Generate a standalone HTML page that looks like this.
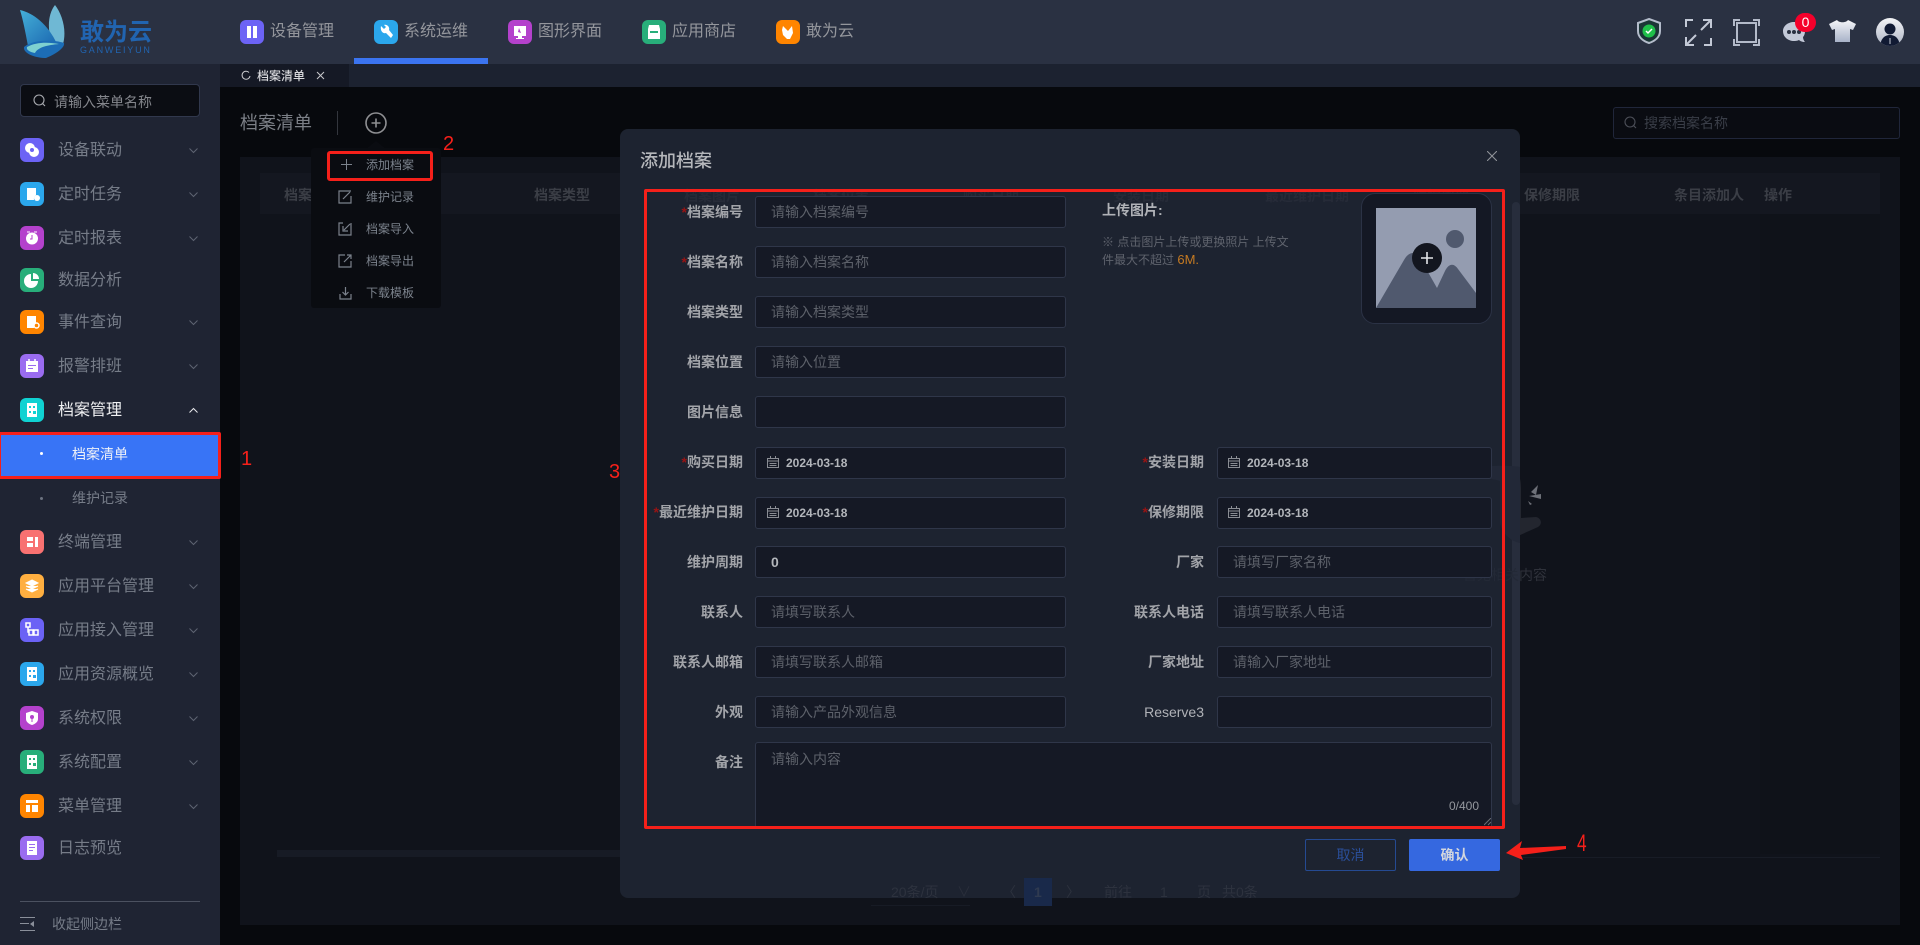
<!DOCTYPE html>
<html lang="zh"><head><meta charset="utf-8"><title>档案清单</title>
<style>
*{box-sizing:border-box;margin:0;padding:0}
html,body{width:1920px;height:945px;overflow:hidden;background:#07090d;font-family:"Liberation Sans","Noto Sans CJK SC",sans-serif}
.a{position:absolute}
.t{position:absolute;white-space:nowrap;line-height:20px}
svg{position:absolute;display:block}
.ic{position:absolute;width:24px;height:24px;border-radius:6px}
.nav{font-size:16px;color:#94969c}
.m{font-size:16px;color:#767c88;left:58px;margin-top:1px}
.chev{position:absolute;left:189px;width:9px;height:9px}
.dd{font-size:12px;color:#7b828c;left:366px}
.th{font-size:14px;font-weight:700;color:#3b3e46}
.ghost{font-size:14px;font-weight:700;color:#262b38}
.l{font-size:14px;font-weight:700;color:#a2a4a9;text-align:right}
.l i{font-style:normal;font-weight:700;color:#981414}
.in{position:absolute;height:32px;background:#151925;border:1px solid #2f3649;border-radius:3px}
.p{font-size:14px;color:#5d616a}
.d{font-size:12px;font-weight:700;color:#b3b6bb}
.pg{font-size:14px;color:#2d323e}
</style></head><body>

<!-- header -->
<div class="a" style="left:0;top:0;width:1920px;height:64px;background:#2a3142"></div>
<div class="a" style="left:0;top:64px;width:1920px;height:23px;background:#1c2230"></div>
<div class="a" style="left:220px;top:64px;width:129px;height:23px;background:#151925"></div>

<!-- logo -->
<svg style="left:20px;top:5px" width="46" height="54" viewBox="20 5 46 54">
<defs><linearGradient id="lg" x1="0" y1="0" x2="1" y2="1"><stop offset="0" stop-color="#45b0d8"/><stop offset="1" stop-color="#1a66b0"/></linearGradient></defs>
<path d="M55 5C48 14 47 28 52 44L63 44C67 30 62 14 55 5Z" fill="#6fb8d4"/>
<path d="M20 10C33 13 48 24 57 44C46 39 35 41 28 46C25 30 23 20 20 10Z" fill="url(#lg)"/>
<path d="M24 47C32 40 52 39 64 43C65 47 58 53 46 58C36 58 23 54 24 47Z" fill="#1c6db6"/>
<path d="M27 47C36 42 48 42 59 44C48 45 38 47 35 53C30 52 26 50 27 47Z" fill="#7ed0d0"/>
</svg>
<div class="t" style="left:80px;top:21px;font-size:24px;line-height:24px;font-weight:700;color:#2164b0">敢为云</div>
<div class="t" style="left:80px;top:45px;font-size:9px;line-height:10px;color:#2164b0;letter-spacing:1.8px">GANWEIYUN</div>

<!-- top nav -->
<div class="ic" style="left:240px;top:20px;background:#6c63f5"></div>
<svg style="left:240px;top:20px" width="24" height="24"><path d="M7 6h4v12H7zM13 6h4v12h-4z" fill="#fff"/></svg>
<div class="t nav" style="left:270px;top:22px">设备管理</div>
<div class="ic" style="left:374px;top:20px;background:#2ba7ec"></div>
<svg style="left:374px;top:20px" width="24" height="24"><path d="M7 6l3 3 2-2-2-2c3-1 6 2 5 5l4 5-2 3-5-5c-3 1-6-2-5-7z" fill="#fff"/></svg>
<div class="t nav" style="left:404px;top:22px">系统运维</div>
<div class="ic" style="left:508px;top:20px;background:#b441cc"></div>
<svg style="left:508px;top:20px" width="24" height="24"><path d="M6 6h12v10h-4v2h2v1H8v-1h2v-2H6z" fill="#fff"/><path d="M11 8l2 5-3-1z" fill="#b441cc"/></svg>
<div class="t nav" style="left:538px;top:22px">图形界面</div>
<div class="ic" style="left:642px;top:20px;background:#28ae7a"></div>
<svg style="left:642px;top:20px" width="24" height="24"><path d="M7 5h10l1 4v10H6V9z" fill="#fff"/><path d="M8 11h8v2H8z" fill="#28ae7a"/></svg>
<div class="t nav" style="left:672px;top:22px">应用商店</div>
<div class="ic" style="left:776px;top:20px;background:#ff8500"></div>
<svg style="left:776px;top:20px" width="24" height="24"><path d="M7 6l5 5 4-5 1 7-3 6h-3L7 15l-1-5z" fill="#fff"/></svg>
<div class="t nav" style="left:806px;top:22px">敢为云</div>
<div class="a" style="left:354px;top:58px;width:134px;height:6px;background:#3b74f0"></div>

<!-- top right icons -->
<svg style="left:1637px;top:18px" width="24" height="26" viewBox="0 0 24 26"><path d="M12 1L23 5V13C23 19 18 23 12 25C6 23 1 19 1 13V5Z" fill="#1b3536" stroke="#b4bccb" stroke-width="2"/><circle cx="12" cy="13" r="6.5" fill="#1fc04a"/><path d="M9 13l2 2 4-4" fill="none" stroke="#fff" stroke-width="1.5"/></svg>
<svg style="left:1685px;top:19px" width="27" height="27" viewBox="0 0 27 27" fill="none" stroke="#c3c9d6" stroke-width="2"><path d="M8 1H1V8M1 26 11 16M1 18V26H9M26 1 16 11M18 1H26V9M26 19V26H19"/></svg>
<svg style="left:1733px;top:19px" width="27" height="27" viewBox="0 0 27 27" fill="none" stroke="#b3bac9" stroke-width="2"><path d="M7 1H1V7M20 1h6v6M1 20v6h6M26 20v6h-6"/><rect x="4" y="4" width="19" height="19"/></svg>
<svg style="left:1783px;top:21px" width="23" height="23" viewBox="0 0 23 23"><path d="M11 1C17 1 22 5 22 10C22 13 21 15 20 16C20 18 21 20 22 21C19 21 17 20 16 19C14 20 12 20 11 20C5 20 0 16 0 10C0 5 5 1 11 1Z" fill="#c3c9d8"/><circle cx="6" cy="11" r="2" fill="#2a3142"/><circle cx="11" cy="11" r="2" fill="#2a3142"/><circle cx="16" cy="11" r="2" fill="#2a3142"/></svg>
<div class="a" style="left:1795px;top:13px;width:21px;height:19px;border-radius:10px;background:#f5002b;color:#fff;font-size:14px;line-height:19px;text-align:center">0</div>
<svg style="left:1829px;top:19px" width="27" height="24" viewBox="0 0 27 24"><defs><linearGradient id="ts" x1="0" y1="0" x2="0" y2="1"><stop offset="0" stop-color="#f4f5f8"/><stop offset="1" stop-color="#a8b2c8"/></linearGradient></defs><path d="M8 1C10 4 17 4 19 1L27 5 24 11 21 10V23H6V10L3 11 0 5Z" fill="url(#ts)"/></svg>
<div class="a" style="left:1876px;top:18px;width:28px;height:28px;border-radius:50%;background:linear-gradient(#f2f3f6,#aeb5c5);overflow:hidden"><svg style="left:0;top:0" width="28" height="28"><circle cx="14" cy="11" r="5.5" fill="#111a33"/><path d="M4 28C5 20 9 17 14 17C19 17 23 20 24 28Z" fill="#111a33"/><path d="M14 20v6" stroke="#c8ccd6"/></svg></div>

<!-- tab -->
<svg style="left:241px;top:70px" width="10" height="11" fill="none" stroke="#c8c9cc" stroke-width="1"><path d="M8 2.5A4 4 0 1 0 9 6"/></svg>
<div class="t" style="left:257px;top:66px;font-size:12px;font-weight:500;color:#d8d9dc">档案清单</div>
<svg style="left:316px;top:71px" width="9" height="9" stroke="#c8c9cc"><path d="M1 1l7 7M8 1l-7 7"/></svg>

<!-- sidebar -->
<div class="a" style="left:0;top:64px;width:220px;height:881px;background:#1f2433"></div>
<div class="a" style="left:20px;top:84px;width:180px;height:33px;background:#0b0d13;border:1px solid #31384d;border-radius:4px"></div>
<svg style="left:33px;top:94px" width="13" height="14" fill="none" stroke="#a9abb0" stroke-width="1.1"><circle cx="6" cy="6" r="5"/><path d="M9.5 9.5l2.5 2.5"/></svg>
<div class="t" style="left:54px;top:92px;font-size:14px;color:#84868c">请输入菜单名称</div>

<div class="ic" style="left:20px;top:138px;background:#6c63f5"></div><svg style="left:20px;top:138px" width="24" height="24"><circle cx="10" cy="10" r="5" fill="#fff"/><circle cx="14" cy="14" r="5" fill="#fff"/><circle cx="12" cy="12" r="2" fill="#6c63f5"/></svg><div class="t m" style="top:140px">设备联动</div>
<div class="ic" style="left:20px;top:182px;background:#2ba7ec"></div><svg style="left:20px;top:182px" width="24" height="24"><path d="M7 6h9v7a5 5 0 0 0-2 5H7z" fill="#fff"/><circle cx="17" cy="16" r="3" fill="#fff"/></svg><div class="t m" style="top:184px">定时任务</div>
<div class="ic" style="left:20px;top:226px;background:#b441cc"></div><svg style="left:20px;top:226px" width="24" height="24"><circle cx="12" cy="12.5" r="6" fill="#fff"/><path d="M12 9v4h-2" stroke="#b441cc" fill="none"/><path d="M7 6h3M14 6h3" stroke="#fff"/></svg><div class="t m" style="top:228px">定时报表</div>
<div class="ic" style="left:20px;top:268px;background:#28ae7a"></div><svg style="left:20px;top:268px" width="24" height="24"><path d="M11 6v7h7a7 7 0 1 1-7-7z" fill="#fff"/><path d="M13 5a6 6 0 0 1 6 6h-6z" fill="#fff"/></svg><div class="t m" style="top:270px">数据分析</div>
<div class="ic" style="left:20px;top:310px;background:#ff8500"></div><svg style="left:20px;top:310px" width="24" height="24"><path d="M7 6h9v7a5 5 0 0 0-2 5H7z" fill="#fff"/><circle cx="16.5" cy="15.5" r="2.5" fill="none" stroke="#fff" stroke-width="1.5"/></svg><div class="t m" style="top:312px">事件查询</div>
<div class="ic" style="left:20px;top:354px;background:#9a6cf0"></div><svg style="left:20px;top:354px" width="24" height="24"><path d="M6 7h12v11H6z" fill="#fff"/><path d="M9 5v3M15 5v3" stroke="#fff" stroke-width="1.5"/><path d="M8 11h8v1H8zM8 14h5v1H8z" fill="#9a6cf0"/></svg><div class="t m" style="top:356px">报警排班</div>
<div class="ic" style="left:20px;top:398px;background:#10d2d2"></div><svg style="left:20px;top:398px" width="24" height="24"><path d="M7 5h10v14H7z" fill="#fff"/><path d="M9 8h2v2H9zM13 8h2v2h-2zM9 13h2v2H9zM13 13h3v3h-3z" fill="#10d2d2"/></svg><div class="t m" style="top:400px;color:#f0f1f3">档案管理</div>

<div class="a" style="left:0;top:434px;width:220px;height:43px;background:#3874f6"></div>
<div class="a" style="left:40px;top:452px;width:3px;height:3px;border-radius:50%;background:#fff"></div>
<div class="t" style="left:72px;top:444px;font-size:14px;color:#eef1f8">档案清单</div>
<div class="a" style="left:40px;top:497px;width:3px;height:3px;border-radius:50%;background:#6c7280"></div>
<div class="t" style="left:72px;top:488px;font-size:14px;color:#767c88">维护记录</div>

<div class="ic" style="left:20px;top:530px;background:#f87171"></div><svg style="left:20px;top:530px" width="24" height="24"><path d="M7 7h6v4H7zM7 13h6v4H7zM15 7h3v10h-3" fill="#fff"/></svg><div class="t m" style="top:532px">终端管理</div>
<div class="ic" style="left:20px;top:574px;background:#ffaf40"></div><svg style="left:20px;top:574px" width="24" height="24"><path d="M12 6l6 3-6 3-6-3zM6 12l6 3 6-3M6 15l6 3 6-3" fill="#fff" stroke="#fff"/></svg><div class="t m" style="top:576px">应用平台管理</div>
<div class="ic" style="left:20px;top:618px;background:#6b62f5"></div><svg style="left:20px;top:618px" width="24" height="24" fill="none" stroke="#fff" stroke-width="1.5"><rect x="6" y="5" width="4" height="4"/><rect x="9" y="12" width="4" height="5"/><rect x="14" y="12" width="4" height="5"/><path d="M8 9v5h1"/></svg><div class="t m" style="top:620px">应用接入管理</div>
<div class="ic" style="left:20px;top:662px;background:#2ba7ec"></div><svg style="left:20px;top:662px" width="24" height="24"><path d="M7 5h10v14H7z" fill="#fff"/><path d="M9 8h2v2H9zM13 8h2v2h-2zM9 13h2v2H9zM13 13h3v3h-3z" fill="#2ba7ec"/></svg><div class="t m" style="top:664px">应用资源概览</div>
<div class="ic" style="left:20px;top:706px;background:#b441cc"></div><svg style="left:20px;top:706px" width="24" height="24"><path d="M12 5l6 2v6c0 3-3 5-6 6-3-1-6-3-6-6V7z" fill="#fff"/><circle cx="12" cy="11" r="2" fill="#b441cc"/><path d="M12 12v4" stroke="#b441cc"/></svg><div class="t m" style="top:708px">系统权限</div>
<div class="ic" style="left:20px;top:750px;background:#28ae7a"></div><svg style="left:20px;top:750px" width="24" height="24"><path d="M7 5h10v14H7z" fill="#fff"/><path d="M9 8h2v2H9zM13 8h2v2h-2zM9 13h2v2H9zM13 13h3v3h-3z" fill="#28ae7a"/></svg><div class="t m" style="top:752px">系统配置</div>
<div class="ic" style="left:20px;top:794px;background:#ff8500"></div><svg style="left:20px;top:794px" width="24" height="24"><path d="M6 6h12v3H6zM6 11h4v7H6zM12 11h6v7h-6z" fill="#fff"/></svg><div class="t m" style="top:796px">菜单管理</div>
<div class="ic" style="left:20px;top:836px;background:#9a6cf0"></div><svg style="left:20px;top:836px" width="24" height="24"><path d="M7 5h10v14H7z" fill="#fff"/><path d="M9 8h6v1H9zM9 11h6v1H9zM9 14h4v1H9z" fill="#9a6cf0"/></svg><div class="t m" style="top:838px">日志预览</div>

<svg class="chev" style="top:146px" width="9" height="9" fill="none" stroke="#5e6472"><path d="M.5 2.5l4 4 4-4"/></svg>
<svg class="chev" style="top:190px" width="9" height="9" fill="none" stroke="#5e6472"><path d="M.5 2.5l4 4 4-4"/></svg>
<svg class="chev" style="top:234px" width="9" height="9" fill="none" stroke="#5e6472"><path d="M.5 2.5l4 4 4-4"/></svg>
<svg class="chev" style="top:318px" width="9" height="9" fill="none" stroke="#5e6472"><path d="M.5 2.5l4 4 4-4"/></svg>
<svg class="chev" style="top:362px" width="9" height="9" fill="none" stroke="#5e6472"><path d="M.5 2.5l4 4 4-4"/></svg>
<svg class="chev" style="top:406px" width="9" height="9" fill="none" stroke="#e8e9ec"><path d="M.5 6.5l4-4 4 4"/></svg>
<svg class="chev" style="top:538px" width="9" height="9" fill="none" stroke="#5e6472"><path d="M.5 2.5l4 4 4-4"/></svg>
<svg class="chev" style="top:582px" width="9" height="9" fill="none" stroke="#5e6472"><path d="M.5 2.5l4 4 4-4"/></svg>
<svg class="chev" style="top:626px" width="9" height="9" fill="none" stroke="#5e6472"><path d="M.5 2.5l4 4 4-4"/></svg>
<svg class="chev" style="top:670px" width="9" height="9" fill="none" stroke="#5e6472"><path d="M.5 2.5l4 4 4-4"/></svg>
<svg class="chev" style="top:714px" width="9" height="9" fill="none" stroke="#5e6472"><path d="M.5 2.5l4 4 4-4"/></svg>
<svg class="chev" style="top:758px" width="9" height="9" fill="none" stroke="#5e6472"><path d="M.5 2.5l4 4 4-4"/></svg>
<svg class="chev" style="top:802px" width="9" height="9" fill="none" stroke="#5e6472"><path d="M.5 2.5l4 4 4-4"/></svg>

<div class="a" style="left:20px;top:901px;width:180px;height:1px;background:#4b5160"></div>
<svg style="left:20px;top:917px" width="15" height="15" fill="#8a8f9a"><path d="M0 0h15v1H0zM0 6h9v1H0zM0 13h15v1H0zM14 4v6l-4-3z"/></svg>
<div class="t" style="left:52px;top:914px;font-size:14px;color:#767c88">收起侧边栏</div>

<!-- content -->
<div class="t" style="left:240px;top:113px;font-size:18px;color:#7b7f86">档案清单</div>
<div class="a" style="left:337px;top:111px;width:1px;height:24px;background:#33363d"></div>
<svg style="left:365px;top:112px" width="22" height="22" fill="none" stroke="#8e8f92" stroke-width="1.6"><circle cx="11" cy="11" r="10"/><path d="M6.5 11h9M11 6.500v9"/></svg>
<div class="a" style="left:1613px;top:107px;width:287px;height:32px;background:#0a0c12;border:1px solid #20263a;border-radius:3px"></div>
<svg style="left:1624px;top:116px" width="13" height="14" fill="none" stroke="#4c4f58" stroke-width="1.1"><circle cx="6" cy="6" r="5"/><path d="M9.500 9.500l2.500 2.500"/></svg>
<div class="t" style="left:1644px;top:113px;font-size:14px;color:#3a3e48">搜索档案名称</div>

<div class="a" style="left:240px;top:157px;width:1660px;height:768px;background:#10131b"></div>
<div class="a" style="left:260px;top:173px;width:1620px;height:41px;background:#141720"></div>
<div class="a" style="left:1760px;top:214px;width:120px;height:640px;background:#0f1219"></div>
<div class="t th" style="left:284px;top:185px">档案编号</div>
<div class="t th" style="left:534px;top:185px">档案类型</div>
<div class="t th" style="left:1524px;top:185px">保修期限</div>
<div class="t th" style="left:1674px;top:185px">条目添加人</div>
<div class="t th" style="left:1764px;top:185px">操作</div>
<div class="a" style="left:277px;top:850px;width:343px;height:7px;background:#171b25"></div>
<div class="a" style="left:1520px;top:857px;width:360px;height:1px;background:#181c26"></div>

<!-- empty figure seen right of modal -->
<svg style="left:1500px;top:460px" width="60" height="90" viewBox="0 0 60 90"><path d="M0 5C14 3 21 12 21 28V58L36 57C41 58 43 64 38 67L18 76H0Z" fill="#23262f"/><path d="M31 32l7-7-2 10zM29 36l12-2v5zM28 41l4 3-2 1z" fill="#6d7078"/></svg>
<div class="t" style="left:1519px;top:565px;font-size:14px;color:#2f323b">内容</div>

<!-- pagination -->
<div class="a" style="left:871px;top:905px;width:99px;height:1px;background:#171b25"></div>

<!-- dropdown -->
<svg style="left:366px;top:141px" width="20" height="8"><path d="M0 8L10 0l10 8z" fill="#0a0c11"/></svg>
<div class="a" style="left:311px;top:148px;width:130px;height:160px;background:#0a0c11;border-radius:3px"></div>
<svg style="left:341px;top:159px" width="11" height="11" stroke="#7b828c"><path d="M0 5.500h11M5.500 0v11"/></svg>
<div class="t dd" style="top:155px">添加档案</div>
<svg style="left:338px;top:190px" width="14" height="14" fill="none" stroke="#7b828c" stroke-width="1.2"><path d="M13 1H1v12h12V6M5 9l7-7"/></svg>
<div class="t dd" style="top:187px">维护记录</div>
<svg style="left:338px;top:222px" width="14" height="14" fill="none" stroke="#7b828c" stroke-width="1.2"><path d="M13 1V13H1V1h4M12 2L6 8M5 4v5h5"/></svg>
<div class="t dd" style="top:219px">档案导入</div>
<svg style="left:338px;top:254px" width="14" height="14" fill="none" stroke="#7b828c" stroke-width="1.2"><path d="M13 7v6H1V1h6M6 8l7-7M9 1h4v4"/></svg>
<div class="t dd" style="top:251px">档案导出</div>
<svg style="left:339px;top:286px" width="13" height="14" fill="none" stroke="#7b828c" stroke-width="1.200"><path d="M1 8v5h11V8M6.500 1v8M3.500 6l3 3 3-3"/></svg>
<div class="t dd" style="top:283px">下载模板</div>

<!-- modal -->
<div class="a" style="left:620px;top:129px;width:900px;height:769px;background:#1d2330;border-radius:8px"></div>
<div class="a" style="left:1512px;top:202px;width:8px;height:603px;background:#272d3c;border-radius:4px"></div>

<div class="t ghost" style="left:684px;top:186px">档案图片</div>
<div class="t ghost" style="left:813px;top:186px">档案位置</div>
<div class="t ghost" style="left:963px;top:186px">购买日期</div>
<div class="t ghost" style="left:1113px;top:186px">安装日期</div>
<div class="t ghost" style="left:1265px;top:186px">最近维护日期</div>
<div class="t ghost" style="left:1413px;top:186px">维护周期</div>
<div class="t pg" style="left:891px;top:882px">20条/页</div>
<div class="t pg" style="left:957px;top:882px;color:#2a2f3b">∨</div>
<div class="t pg" style="left:1002px;top:882px">〈</div>
<div class="a" style="left:1024px;top:878px;width:28px;height:28px;background:#19294a"></div>
<div class="t pg" style="left:1034px;top:882px;font-weight:700;color:#2f3a50">1</div>
<div class="t pg" style="left:1066px;top:882px">〉</div>
<div class="t pg" style="left:1104px;top:882px">前往</div>
<div class="t pg" style="left:1160px;top:882px">1</div>
<div class="t pg" style="left:1197px;top:882px">页</div>
<div class="t pg" style="left:1222px;top:882px">共0条</div>
<svg style="left:1460px;top:463px" width="60" height="80" viewBox="0 0 60 80"><path d="M8 8C14 2 50 2 60 4V80C50 78 42 70 40 60V18C30 14 16 18 8 8Z" fill="#222837"/></svg>
<div class="t" style="left:1463px;top:565px;font-size:14px;color:#232936">暂无相关</div>

<div class="t" style="left:640px;top:151px;font-size:18px;font-weight:500;color:#b5b7bb">添加档案</div>
<svg style="left:1487px;top:151px" width="10" height="10" stroke="#8f9298" stroke-width="1.100"><path d="M0 0l10 10M10 0L0 10"/></svg>

<!-- left col -->
<div class="t l" style="right:1177px;top:202px"><i>*</i>档案编号</div>
<div class="in" style="left:755px;top:196px;width:311px"></div><div class="t p" style="left:771px;top:202px">请输入档案编号</div>
<div class="t l" style="right:1177px;top:252px"><i>*</i>档案名称</div>
<div class="in" style="left:755px;top:246px;width:311px"></div><div class="t p" style="left:771px;top:252px">请输入档案名称</div>
<div class="t l" style="right:1177px;top:302px">档案类型</div>
<div class="in" style="left:755px;top:296px;width:311px"></div><div class="t p" style="left:771px;top:302px">请输入档案类型</div>
<div class="t l" style="right:1177px;top:352px">档案位置</div>
<div class="in" style="left:755px;top:346px;width:311px"></div><div class="t p" style="left:771px;top:352px">请输入位置</div>
<div class="t l" style="right:1177px;top:402px">图片信息</div>
<div class="in" style="left:755px;top:396px;width:311px"></div>

<div class="t l" style="right:1177px;top:452px"><i>*</i>购买日期</div>
<div class="in" style="left:755px;top:447px;width:311px"></div><div class="t d" style="left:786px;top:453px">2024-03-18</div>
<svg style="left:767px;top:456px" width="12" height="12" fill="none" stroke="#8a8d94"><path d="M.5 2.500h11v9H.5zM.5 5h11M3.500 0v2M8.500 0v2M2.500 7.500h7M2.500 9.500h7"/></svg>
<div class="t l" style="right:1177px;top:502px"><i>*</i>最近维护日期</div>
<div class="in" style="left:755px;top:497px;width:311px"></div><div class="t d" style="left:786px;top:503px">2024-03-18</div>
<svg style="left:767px;top:506px" width="12" height="12" fill="none" stroke="#8a8d94"><path d="M.5 2.500h11v9H.5zM.5 5h11M3.500 0v2M8.500 0v2M2.500 7.500h7M2.500 9.500h7"/></svg>
<div class="t l" style="right:1177px;top:552px">维护周期</div>
<div class="in" style="left:755px;top:546px;width:311px"></div><div class="t" style="left:771px;top:552px;font-size:14px;font-weight:700;color:#b3b6bb">0</div>
<div class="t l" style="right:1177px;top:602px">联系人</div>
<div class="in" style="left:755px;top:596px;width:311px"></div><div class="t p" style="left:771px;top:602px">请填写联系人</div>
<div class="t l" style="right:1177px;top:652px">联系人邮箱</div>
<div class="in" style="left:755px;top:646px;width:311px"></div><div class="t p" style="left:771px;top:652px">请填写联系人邮箱</div>
<div class="t l" style="right:1177px;top:702px">外观</div>
<div class="in" style="left:755px;top:696px;width:311px"></div><div class="t p" style="left:771px;top:702px">请输入产品外观信息</div>

<!-- right col -->
<div class="t l" style="right:716px;top:452px"><i>*</i>安装日期</div>
<div class="in" style="left:1217px;top:447px;width:275px"></div><div class="t d" style="left:1247px;top:453px">2024-03-18</div>
<svg style="left:1228px;top:456px" width="12" height="12" fill="none" stroke="#8a8d94"><path d="M.5 2.500h11v9H.5zM.5 5h11M3.500 0v2M8.500 0v2M2.500 7.500h7M2.500 9.500h7"/></svg>
<div class="t l" style="right:716px;top:502px"><i>*</i>保修期限</div>
<div class="in" style="left:1217px;top:497px;width:275px"></div><div class="t d" style="left:1247px;top:503px">2024-03-18</div>
<svg style="left:1228px;top:506px" width="12" height="12" fill="none" stroke="#8a8d94"><path d="M.5 2.500h11v9H.5zM.5 5h11M3.500 0v2M8.500 0v2M2.500 7.500h7M2.500 9.500h7"/></svg>
<div class="t l" style="right:716px;top:552px">厂家</div>
<div class="in" style="left:1217px;top:546px;width:275px"></div><div class="t p" style="left:1233px;top:552px">请填写厂家名称</div>
<div class="t l" style="right:716px;top:602px">联系人电话</div>
<div class="in" style="left:1217px;top:596px;width:275px"></div><div class="t p" style="left:1233px;top:602px">请填写联系人电话</div>
<div class="t l" style="right:716px;top:652px">厂家地址</div>
<div class="in" style="left:1217px;top:646px;width:275px"></div><div class="t p" style="left:1233px;top:652px">请输入厂家地址</div>
<div class="t l" style="right:716px;top:702px;font-weight:400;color:#b0b2b7">Reserve3</div>
<div class="in" style="left:1217px;top:696px;width:275px"></div>

<!-- upload -->
<div class="t" style="left:1102px;top:200px;font-size:14px;font-weight:700;color:#b0b2b7">上传图片:</div>
<div class="t" style="left:1102px;top:232px;font-size:12px;color:#5f636d">※ 点击图片上传或更换照片 上传文</div>
<div class="t" style="left:1102px;top:250px;font-size:12px;color:#5f636d">件最大不超过 <span style="color:#c57a22;font-size:13px">6M.</span></div>
<div class="a" style="left:1361px;top:193px;width:131px;height:131px;background:#141824;border:1px solid #2b3245;border-radius:14px"></div>
<svg style="left:1376px;top:208px" width="100" height="100" viewBox="0 0 100 100"><rect width="100" height="100" fill="#949cb0"/><circle cx="79" cy="31" r="9" fill="#50596e"/><path d="M0 100L28 52C33 43 40 43 44 50L61 80L69 63C73 55 78 55 82 61L100 85V100Z" fill="#50596e"/></svg>
<div class="a" style="left:1412px;top:243px;width:30px;height:30px;border-radius:50%;background:#13161f"></div>
<svg style="left:1421px;top:252px" width="12" height="12" stroke="#e4e5e8" stroke-width="1.600"><path d="M0 6h12M6 0v12"/></svg>

<!-- textarea -->
<div class="t l" style="right:1177px;top:752px">备注</div>
<div class="in" style="left:755px;top:742px;width:737px;height:86px;border-radius:3px 3px 0 0"></div>
<div class="t p" style="left:771px;top:749px">请输入内容</div>
<div class="t" style="left:1449px;top:796px;font-size:12px;color:#95989e">0/400</div>
<svg style="left:1484px;top:818px" width="7" height="8" stroke="#6a6d74"><path d="M0 7L7 0M4 7l3-3"/></svg>

<!-- buttons -->
<div class="a" style="left:1305px;top:839px;width:91px;height:32px;border:1px solid #254a92;border-radius:2px;color:#2a4f9a;font-size:14px;line-height:30px;text-align:center">取消</div>
<div class="a" style="left:1409px;top:839px;width:91px;height:32px;background:#3568e0;border-radius:2px;color:#d2d6de;font-size:14px;font-weight:700;line-height:32px;text-align:center">确认</div>

<!-- annotations -->
<div class="a" style="left:-2px;top:432px;width:223px;height:47px;border:3px solid #f5201a;border-radius:2px"></div>
<div class="a" style="left:327px;top:151px;width:106px;height:30px;border:3px solid #f5201a;border-radius:3px"></div>
<div class="a" style="left:644px;top:189px;width:861px;height:640px;border:3px solid #f5201a;border-radius:2px"></div>
<div class="t" style="left:241px;top:449px;font-size:20px;color:#f5201a">1</div>
<div class="t" style="left:443px;top:134px;font-size:20px;color:#f5201a">2</div>
<div class="t" style="left:609px;top:462px;font-size:20px;color:#f5201a">3</div>
<div class="t" style="left:1577px;top:834px;font-size:24px;color:#f5201a;transform:scaleX(.72);transform-origin:left">4</div>
<svg style="left:1505px;top:840px" width="62" height="20"><path d="M1 13L17 1L15 8L61 6L61 9L16 15L18 20Z" fill="#f5201a"/></svg>
</body></html>
